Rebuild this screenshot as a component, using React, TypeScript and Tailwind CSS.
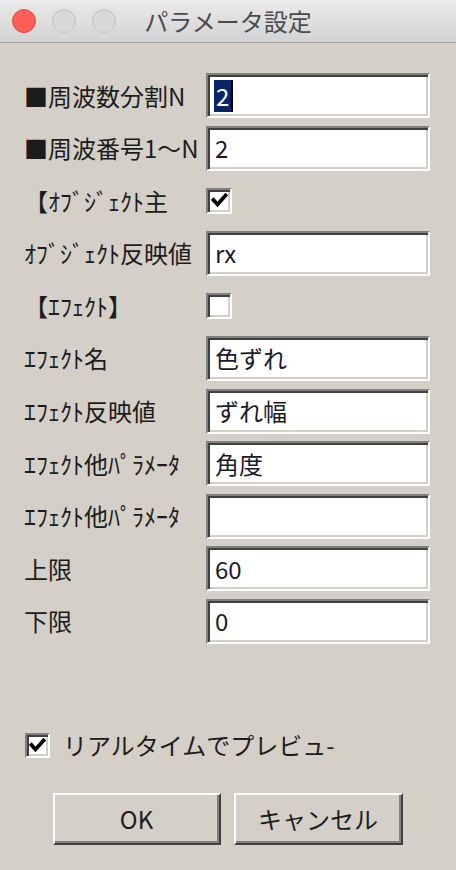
import React from "react";

const font = "font-['Noto_Sans_CJK_JP','Noto_Sans',sans-serif]";

function Field({ value, selected }: { value?: string; selected?: boolean }) {
  return (
    <div className="w-[224px] h-[45px] bg-white border-2 border-t-[#808080] border-l-[#808080] border-b-white border-r-white shadow-[inset_2px_2px_0_#404040,inset_-2px_-2px_0_#d4d0c8] flex items-center pl-[6px]">
      {selected ? (
        <div className="flex items-center">
          <span className="inline-block bg-[#0a246a] text-white leading-[32px] text-[24px] px-[2px]">{value}</span>
          <span className="inline-block w-[2px] h-[32px] bg-black" />
        </div>
      ) : (
        <span className="text-[24px] leading-none text-[#1a1a2a] pl-[1px]">{value}</span>
      )}
    </div>
  );
}

function Check({ checked, size = 26 }: { checked?: boolean; size?: number }) {
  return (
    <div
      className={`${size === 26 ? "w-[26px] h-[26px]" : "w-[25px] h-[25px]"} bg-white border-2 border-t-[#808080] border-l-[#808080] border-b-white border-r-white shadow-[inset_2px_2px_0_#404040,inset_-2px_-2px_0_#d4d0c8] flex items-center justify-center`}
    >
      {checked && (
        <svg width="17" height="15" viewBox="0 0 17 15">
          <path d="M2.5 7 L6.5 11.5 L14.5 2.5" fill="none" stroke="#000" strokeWidth="3.8" strokeLinecap="square" strokeLinejoin="miter" />
        </svg>
      )}
    </div>
  );
}

function Row({ label, children }: { label: string; children: React.ReactNode }) {
  return (
    <div className="flex items-center h-[45px]">
      <div className="w-[182px] text-[24px] leading-none text-[#1c1c1c] whitespace-nowrap">{label}</div>
      {children}
    </div>
  );
}

function Button({ label, w }: { label: string; w: string }) {
  return (
    <div
      className={`${w} h-[52px] border-2 border-t-white border-l-white border-b-[#404040] border-r-[#404040] shadow-[inset_-2px_-2px_0_#808080] flex items-center justify-center text-[24px] leading-none text-[#1c1c1c]`}
    >
      {label}
    </div>
  );
}

export default function App() {
  return (
    <div className={`w-[456px] h-[870px] bg-[#d4d0c8] flex flex-col ${font}`}>
      <div className="h-[43px] shrink-0 bg-gradient-to-b from-[#ebeaeb] to-[#d4d3d4] border-b border-[#a9a8a9] relative flex items-center">
        <div className="flex items-center gap-[16px] pl-[12px]">
          <div className="w-[24px] h-[24px] rounded-full bg-[#fc5f57] border border-[#df4a44]" />
          <div className="w-[24px] h-[24px] rounded-full bg-[#d9d8d9] border border-[#c4c3c4]" />
          <div className="w-[24px] h-[24px] rounded-full bg-[#d9d8d9] border border-[#c4c3c4]" />
        </div>
        <div className="absolute inset-0 flex items-center justify-center">
          <span className="text-[24px] leading-none text-[#4b4b4b]">パラメータ設定</span>
        </div>
      </div>

      <div className="flex flex-col gap-[7.6px] pt-[30px] pl-[24px]">
        <Row label="■周波数分割N">
          <Field value="2" selected />
        </Row>
        <Row label="■周波番号1～N">
          <Field value="2" />
        </Row>
        <Row label="【ｵﾌﾞｼﾞｪｸﾄ主">
          <Check checked />
        </Row>
        <Row label="ｵﾌﾞｼﾞｪｸﾄ反映値">
          <Field value="rx" />
        </Row>
        <Row label="【ｴﾌｪｸﾄ】">
          <Check />
        </Row>
        <Row label="ｴﾌｪｸﾄ名">
          <Field value="色ずれ" />
        </Row>
        <Row label="ｴﾌｪｸﾄ反映値">
          <Field value="ずれ幅" />
        </Row>
        <Row label="ｴﾌｪｸﾄ他ﾊﾟﾗﾒｰﾀ">
          <Field value="角度" />
        </Row>
        <Row label="ｴﾌｪｸﾄ他ﾊﾟﾗﾒｰﾀ">
          <Field value="" />
        </Row>
        <Row label="上限">
          <Field value="60" />
        </Row>
        <Row label="下限">
          <Field value="0" />
        </Row>
      </div>

      <div className="flex items-center h-[25px] mt-[89px] pl-[25px] gap-[13px]">
        <Check checked size={25} />
        <span className="text-[24px] leading-none text-[#1c1c1c]">リアルタイムでプレビュ-</span>
      </div>

      <div className="flex justify-center gap-[13px] mt-[35px] pr-[1px]">
        <Button label="OK" w="w-[168px]" />
        <Button label="キャンセル" w="w-[169px]" />
      </div>
    </div>
  );
}
